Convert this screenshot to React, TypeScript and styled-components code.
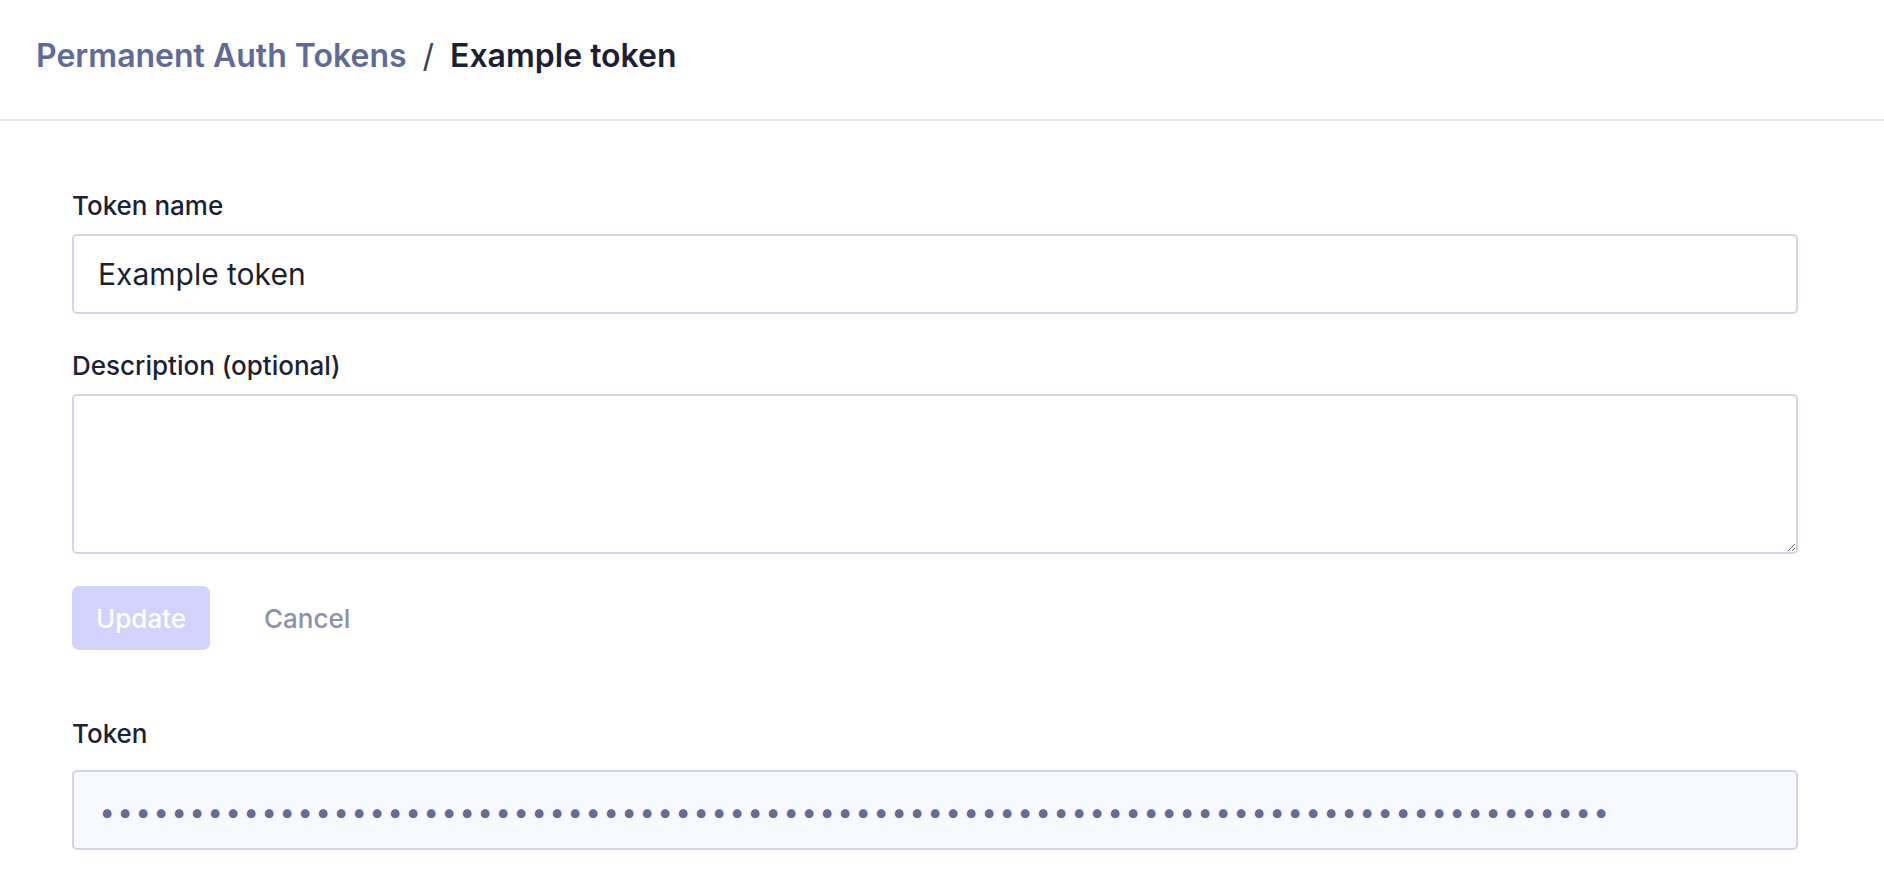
import React from "react";
import styled, { createGlobalStyle } from "styled-components";

const GlobalStyle = createGlobalStyle`
  html, body {
    margin: 0;
    padding: 0;
    background: #ffffff;
  }
  body {
    font-family: Inter, "Noto Sans", "Liberation Sans", sans-serif;
    color: #1b1f36;
    -webkit-font-smoothing: antialiased;
  }
  * { box-sizing: border-box; }
`;

const Page = styled.div`
  min-height: 880px;
  background: #ffffff;
`;

const Header = styled.header`
  height: 121px;
  border-bottom: 2px solid #e6e6f3;
  display: flex;
  align-items: center;
  padding: 0 36px 8px;
`;

const Breadcrumb = styled.nav`
  display: flex;
  align-items: baseline;
  gap: 16px;
  font-size: 32px;
  line-height: 38px;
  font-weight: 600;
`;

const CrumbLink = styled.a`
  color: #5f6a9a;
  text-decoration: none;
  cursor: pointer;
`;

const CrumbSep = styled.span`
  color: #3c4158;
  font-weight: 400;
`;

const CrumbCurrent = styled.span`
  color: #1b1f36;
`;

const Main = styled.main`
  padding: 70px 86px 0 72px;
  display: flex;
  flex-direction: column;
`;

const Field = styled.div<{ $top?: number; $gap?: number }>`
  display: flex;
  flex-direction: column;
  gap: ${(p) => p.$gap ?? 13}px;
  margin-top: ${(p) => p.$top ?? 0}px;
`;

const Label = styled.label`
  display: block;
  font-size: 26px;
  line-height: 30px;
  font-weight: 500;
  color: #1c2136;
`;

const TextInput = styled.input`
  height: 80px;
  width: 100%;
  border: 2px solid #d3d5e7;
  border-radius: 5px;
  background: #ffffff;
  padding: 0 24px;
  font-family: inherit;
  font-size: 30px;
  color: #1b1f36;
  outline: none;
`;

const TextArea = styled.textarea`
  height: 160px;
  width: 100%;
  border: 2px solid #d3d5e7;
  border-radius: 5px;
  background: #ffffff;
  padding: 16px 24px;
  font-family: inherit;
  font-size: 30px;
  color: #1b1f36;
  outline: none;
  display: block;
`;

const Actions = styled.div`
  display: flex;
  align-items: center;
  gap: 30px;
  margin-top: 32px;
`;

const Button = styled.button<{ $variant: "primary" | "ghost" }>`
  height: 64px;
  padding: 0 24px;
  border: none;
  border-radius: 7px;
  font-family: inherit;
  font-size: 26px;
  font-weight: 500;
  cursor: pointer;
  background: ${(p) => (p.$variant === "primary" ? "#d3d2fd" : "transparent")};
  color: ${(p) => (p.$variant === "primary" ? "#ffffff" : "#8b90ae")};
`;

const TokenBox = styled.div`
  height: 80px;
  width: 100%;
  border: 2px solid #d3d5e7;
  border-radius: 5px;
  background: #f8f9fe;
  padding: 4px 0 0 24px;
  display: flex;
  align-items: center;
  overflow: hidden;
  color: #636d96;
  font-size: 28px;
  line-height: 1;
`;

const Bullet = styled.span`
  display: inline-block;
  width: 18px;
  text-align: center;
`;

const TOKEN_LENGTH = 84;

export default function App() {
  const bullets = Array.from({ length: TOKEN_LENGTH }, (_, i) => (
    <Bullet key={i}>•</Bullet>
  ));
  return (
    <Page>
      <GlobalStyle />
      <Header>
        <Breadcrumb>
          <CrumbLink>Permanent Auth Tokens</CrumbLink>
          <CrumbSep>/</CrumbSep>
          <CrumbCurrent>Example token</CrumbCurrent>
        </Breadcrumb>
      </Header>
      <Main>
        <Field>
          <Label htmlFor="token-name">Token name</Label>
          <TextInput id="token-name" defaultValue="Example token" />
        </Field>
        <Field $top={37}>
          <Label htmlFor="token-desc">Description (optional)</Label>
          <TextArea id="token-desc" />
        </Field>
        <Actions>
          <Button $variant="primary" disabled>
            Update
          </Button>
          <Button $variant="ghost">Cancel</Button>
        </Actions>
        <Field $top={69} $gap={21}>
          <Label>Token</Label>
          <TokenBox aria-label="Token value (hidden)">{bullets}</TokenBox>
        </Field>
      </Main>
    </Page>
  );
}
